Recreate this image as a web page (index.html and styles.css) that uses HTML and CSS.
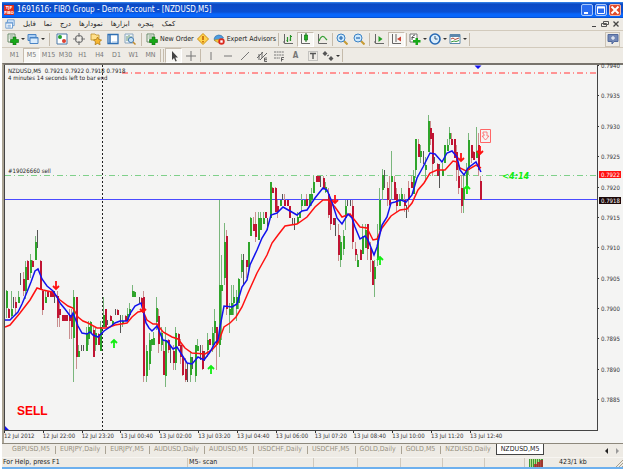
FILE: index.html
```html
<!DOCTYPE html>
<html lang="en">
<head>
<meta charset="utf-8">
<title>FIBO Group - Demo Account</title>
<link rel="stylesheet" href="styles.css">
</head>
<body>
<svg class="sprite" aria-hidden="true">
  <symbol id="i-new" viewBox="0 0 12 12"><path d="M1 1h7v8H1z" fill="#f4f6f2" stroke="#6a8a6a"/><path d="M2.500 3h4M2.500 5h3" stroke="#7aa07a"/><path d="M6 4h3v2.500h2.500v3H9V12H6V9.500H3.500v-3H6z" fill="#18a818" stroke="#0a6c0a" stroke-width=".6"/></symbol>
  <symbol id="i-profiles" viewBox="0 0 12 12"><path d="M1 1.500h8v6H1z" fill="#a9cdf3" stroke="#4b84c4"/><path d="M3 4.500h8v6H3z" fill="#d9ebfc" stroke="#4b84c4"/><path d="M3 5h8" stroke="#4b84c4"/></symbol>
  <symbol id="i-market" viewBox="0 0 12 12"><path d="M1 1h10v10H1z" fill="#fff" stroke="#4a78a8"/><circle cx="4" cy="4" r="2" fill="#22a030"/><circle cx="8" cy="8" r="2" fill="#dc4030"/></symbol>
  <symbol id="i-target" viewBox="0 0 12 12"><circle cx="6" cy="6" r="3.500" fill="none" stroke="#777" stroke-width="1.200"/><path d="M6 0v4M6 8v4M0 6h4M8 6h4" stroke="#777" stroke-width="1.200"/></symbol>
  <symbol id="i-star" viewBox="0 0 12 12"><path d="M1 1h4l1 1h3v5H1z" fill="#ffe08a" stroke="#bb8f2a" stroke-width=".8"/><path d="M7.500 4l1.300 2.500 2.800.4-2 2 .5 2.800-2.600-1.300-2.500 1.300.5-2.800-2-2 2.800-.4z" fill="#f7b733" stroke="#a87410" stroke-width=".7"/></symbol>
  <symbol id="i-terminal" viewBox="0 0 12 12"><path d="M1 1.500h10v9H1z" fill="#fff" stroke="#2f6fb4" stroke-width="1.300"/><path d="M3 2v8" stroke="#2f6fb4" stroke-width="1.500"/><path d="M5 9h5" stroke="#9bc0e4"/></symbol>
  <symbol id="i-tester" viewBox="0 0 12 12"><path d="M1 1h8v9H1z" fill="#eef4fa" stroke="#8ba6bd"/><path d="M3 3v5M5 2v5M7 3v3" stroke="#6d9b74"/><circle cx="7" cy="7" r="2.600" fill="#c4e2f6" stroke="#4d80b3"/><path d="M9 9l2.500 2.500" stroke="#c28c2c" stroke-width="1.500"/></symbol>
  <symbol id="i-meta" viewBox="0 0 12 12"><path d="M6 .5L11.500 6 6 11.500.5 6z" fill="#ffd34d" stroke="#d09010"/><path d="M6 3v4M6 8v1.500" stroke="#c06000" stroke-width="1.500"/></symbol>
  <symbol id="i-expert" viewBox="0 0 12 12"><path d="M1 6a5 5 0 0 1 9.500-1L7 8H2z" fill="#4e9de0" stroke="#2868a4" stroke-width=".6"/><path d="M1 7q3 3 6 3l2-4-5 .5z" fill="#f4c63d" stroke="#a9821a" stroke-width=".5"/><circle cx="8.500" cy="8.500" r="3.200" fill="#db2b20"/><path d="M7.300 7.300h2.400v2.400H7.300z" fill="#fff"/></symbol>
  <symbol id="i-bars" viewBox="0 0 12 12"><path d="M2.500 1v9.500H11M1 9h2" fill="none" stroke="#666"/><path d="M5.500 4v5M4.500 7.500h1M8.500 2v6M8.500 3.500H10M7.500 7h1" fill="none" stroke="#279427" stroke-width="1.200"/></symbol>
  <symbol id="i-candle" viewBox="0 0 12 12"><path d="M2.500 1v9.500H11" fill="none" stroke="#666"/><path d="M7 0v9" stroke="#126c12"/><path d="M5.500 2h3v5h-3z" fill="#22b322" stroke="#126c12" stroke-width=".7"/></symbol>
  <symbol id="i-line" viewBox="0 0 12 12"><path d="M2.500 1v9.500H11" fill="none" stroke="#666"/><path d="M3 8q3-8 7-2l1 1" fill="none" stroke="#35a035" stroke-width="1.200"/></symbol>
  <symbol id="i-zin" viewBox="0 0 12 12"><path d="M7.500 7.500l4 4" stroke="#c79b35" stroke-width="2"/><circle cx="5" cy="5" r="4" fill="#cde8fc" stroke="#3b82c4"/><path d="M3 5h4M5 3v4" stroke="#2267b0" stroke-width="1.200"/></symbol>
  <symbol id="i-zout" viewBox="0 0 12 12"><path d="M7.500 7.500l4 4" stroke="#c79b35" stroke-width="2"/><circle cx="5" cy="5" r="4" fill="#cde8fc" stroke="#3b82c4"/><path d="M3 5h4" stroke="#2267b0" stroke-width="1.200"/></symbol>
  <symbol id="i-scroll" viewBox="0 0 12 12"><path d="M2.500 1v9.500H11M1 9h2" fill="none" stroke="#666"/><path d="M5.500 3v6l4-3z" fill="#22a022"/></symbol>
  <symbol id="i-shift" viewBox="0 0 12 12"><path d="M2.500 1v9.500H11M6 1v8" fill="none" stroke="#666"/><path d="M11 3.500v5L7 6z" fill="#cf4535"/></symbol>
  <symbol id="i-ind" viewBox="0 0 12 12"><path d="M1 1h7v8H1z" fill="#fff" stroke="#777"/><path d="M3 7q0-5 3-5M2.500 4.500h3" fill="none" stroke="#555"/><path d="M6.500 5h2.500v2h2.500v2.500H9V12H6.500V9.500H4V7h2.500z" fill="#18a818"/></symbol>
  <symbol id="i-clock" viewBox="0 0 12 12"><circle cx="6" cy="6" r="5" fill="#dceefc" stroke="#2769b4" stroke-width="1.600"/><path d="M6 3v3h2.500" fill="none" stroke="#33567c"/></symbol>
  <symbol id="i-tpl" viewBox="0 0 12 12"><path d="M1 1.500h10v9H1z" fill="#fff" stroke="#5b87ac"/><path d="M1 3h10" stroke="#5b87ac" stroke-width="2"/><path d="M2 6l2-1 2 1.500L10 5" fill="none" stroke="#b14a3a"/><path d="M2 9l3-1 2 .5L10 7.500" fill="none" stroke="#36963c"/></symbol>
  <symbol id="i-chat" viewBox="0 0 12 12"><path d="M1 1.500h10v7H7L5 11V8.500H1z" fill="#7287b5" stroke="#50689c"/><path d="M4 5h4M6 3v4" stroke="#fff"/></symbol>
  <symbol id="i-cursor" viewBox="0 0 12 12"><path d="M4 1v9l2-2 1.500 3.500 1.300-.6L7.300 7.500H10z" fill="#444"/></symbol>
  <symbol id="i-cross" viewBox="0 0 12 12"><path d="M6 1v10M1 6h10" stroke="#777"/></symbol>
  <symbol id="i-vline" viewBox="0 0 12 12"><path d="M6 2v8" stroke="#777"/></symbol>
  <symbol id="i-hline" viewBox="0 0 12 12"><path d="M2 6h8" stroke="#777"/></symbol>
  <symbol id="i-trend" viewBox="0 0 12 12"><path d="M2 10l8-8" stroke="#777"/></symbol>
  <symbol id="i-channel" viewBox="0 0 12 12"><path d="M1 8l6-6M4 10l7-7M3 4v6M6 2v6" stroke="#666"/><path d="M11 8H8.500v3.500H11M8.500 9.700H11" fill="none" stroke="#555" stroke-width=".9"/></symbol>
  <symbol id="i-fibo" viewBox="0 0 12 12"><path d="M1 2h10M1 5h10M1 8h6" stroke="#777" stroke-dasharray="2 .6"/><path d="M11 7.500H8.500v4M8.500 9.500h2" fill="none" stroke="#555" stroke-width=".9"/></symbol>
  <symbol id="i-label" viewBox="0 0 12 12"><path d="M1.500 1.500h9v9h-9z" fill="none" stroke="#999" stroke-dasharray="1 1"/><path d="M3 3.500h6M6 3.500V9" stroke="#555" stroke-width="1.400"/></symbol>
  <symbol id="i-arrows" viewBox="0 0 12 12"><path d="M3 1l2.500 2.500L3 6 .5 3.500zM9 6l2.500 2.500L9 11 6.500 8.500z" fill="#555"/><path d="M5 6l2-1" stroke="#555"/></symbol>
  <symbol id="i-doc" viewBox="0 0 12 12"><path d="M3 1h8v7H3z" fill="#d9ebfc" stroke="#5b92cc"/><path d="M1 4h8v7H1z" fill="#fff" stroke="#5b92cc"/><path d="M1 5h8M3 7.500h4M3 9.500h4" stroke="#5b92cc"/></symbol>
</svg>

<div class="window">
  <header class="title">
    <span class="logo"><b>TJF</b><b>FIBO</b></span>
    <h1>1691616: FIBO Group - Demo Account - [NZDUSD,M5]</h1>
    <div class="winbtns">
      <button aria-label="Minimize"><svg viewBox="0 0 10 10"><path d="M2 8h4" stroke="#fff" stroke-width="2"/></svg></button>
      <button aria-label="Restore"><svg viewBox="0 0 10 10"><path d="M1.500 2h7v6.500h-7z" fill="none" stroke="#fff"/><path d="M1 2.500h8" stroke="#fff" stroke-width="2"/></svg></button>
      <button class="close" aria-label="Close"><svg viewBox="0 0 10 10"><path d="M1.500 1.500l7 7M8.500 1.500l-7 7" stroke="#fff" stroke-width="2"/></svg></button>
    </div>
  </header>

  <nav class="menu">
    <svg class="ico"><use href="#i-doc"/></svg>
    <a href="#" lang="fa">فایل</a><a href="#" lang="fa">نما</a><a href="#" lang="fa">درج</a><a href="#" lang="fa">نمودارها</a><a href="#" lang="fa">ابزارها</a><a href="#" lang="fa">پنجره</a><a href="#" lang="fa">کمک</a>
    <div class="docbtns">
      <button aria-label="Minimize chart"><svg viewBox="0 0 8 8"><path d="M2 6.500h4" stroke="#444"/></svg></button>
      <button aria-label="Restore chart"><svg viewBox="0 0 8 8"><path d="M2.500 1.500h5v3h-5zM.5 3.500h5v3h-5z" fill="none" stroke="#555"/></svg></button>
      <button aria-label="Close chart"><svg viewBox="0 0 8 8"><path d="M1.500 1.500l5 5M6.500 1.500l-5 5" stroke="#444" stroke-width="1.300"/></svg></button>
    </div>
  </nav>

  <div class="toolbar">
    <button class="drop" aria-label="New chart"><svg class="ico"><use href="#i-new"/></svg></button>
    <button class="drop" aria-label="Profiles"><svg class="ico"><use href="#i-profiles"/></svg></button>
    <i class="sep wide-sep"></i>
    <button aria-label="Market Watch"><svg class="ico"><use href="#i-market"/></svg></button>
    <button aria-label="Data Window"><svg class="ico"><use href="#i-target"/></svg></button>
    <button aria-label="Navigator"><svg class="ico"><use href="#i-star"/></svg></button>
    <button aria-label="Terminal"><svg class="ico"><use href="#i-terminal"/></svg></button>
    <button aria-label="Strategy Tester"><svg class="ico"><use href="#i-tester"/></svg></button>
    <i class="sep wide-sep"></i>
    <button class="wide"><svg class="ico"><use href="#i-new"/></svg>New Order</button>
    <button aria-label="MetaEditor"><svg class="ico"><use href="#i-meta"/></svg></button>
    <button class="wide"><svg class="ico"><use href="#i-expert"/></svg>Expert Advisors</button>
    <i class="sep"></i>
    <button aria-label="Bar chart"><svg class="ico"><use href="#i-bars"/></svg></button>
    <button class="on" aria-label="Candlesticks"><svg class="ico"><use href="#i-candle"/></svg></button>
    <button aria-label="Line chart"><svg class="ico"><use href="#i-line"/></svg></button>
    <i class="sep"></i>
    <button aria-label="Zoom in"><svg class="ico"><use href="#i-zin"/></svg></button>
    <button aria-label="Zoom out"><svg class="ico"><use href="#i-zout"/></svg></button>
    <i class="sep"></i>
    <button aria-label="Auto scroll"><svg class="ico"><use href="#i-scroll"/></svg></button>
    <button class="on" aria-label="Chart shift"><svg class="ico"><use href="#i-shift"/></svg></button>
    <i class="sep"></i>
    <button class="drop" aria-label="Indicators"><svg class="ico"><use href="#i-ind"/></svg></button>
    <button class="drop" aria-label="Periods"><svg class="ico"><use href="#i-clock"/></svg></button>
    <button class="drop" aria-label="Templates"><svg class="ico"><use href="#i-tpl"/></svg></button>
    <i class="sep"></i>
    <button class="chat" aria-label="Chat"><svg class="ico"><use href="#i-chat"/></svg></button>
  </div>

  <div class="toolbar frames">
    <button>M1</button><button class="on">M5</button><button>M15</button><button>M30</button><button>H1</button><button>H4</button><button>D1</button><button>W1</button><button>MN</button>
    <i class="sep"></i><i class="sep"></i>
    <button class="on" aria-label="Cursor"><svg class="ico"><use href="#i-cursor"/></svg></button>
    <button aria-label="Crosshair"><svg class="ico"><use href="#i-cross"/></svg></button>
    <i class="sep"></i>
    <button aria-label="Vertical line"><svg class="ico"><use href="#i-vline"/></svg></button>
    <button aria-label="Horizontal line"><svg class="ico"><use href="#i-hline"/></svg></button>
    <button aria-label="Trendline"><svg class="ico"><use href="#i-trend"/></svg></button>
    <button aria-label="Channel"><svg class="ico"><use href="#i-channel"/></svg></button>
    <button aria-label="Fibonacci"><svg class="ico"><use href="#i-fibo"/></svg></button>
    <button class="letter">A</button>
    <button aria-label="Text label"><svg class="ico"><use href="#i-label"/></svg></button>
    <button class="drop" aria-label="Arrows"><svg class="ico"><use href="#i-arrows"/></svg></button>
    <i class="sep"></i>
  </div>

  <main class="chart">
    <section class="plot">
      <svg id="plot" viewBox="5 65 592 365" preserveAspectRatio="none" aria-label="NZDUSD M5 candlestick chart">
        <path d="M122 72.500H597" class="stop"/>
        <path d="M5 175.500H597" class="entry"/>
        <path d="M5 199.500H597" class="bid"/>
        <path d="M102.500 65V430" class="day"/>
        <g id="candles" shape-rendering="crispEdges"></g>
        <polyline class="slow" points="5,327 10,325 20,313 30,300 37,288 43,290 52,292 60,300 68,306 73,308 78,317 83,321 88,323 97,328 107,328 115,325 127,323 132,317 138,312 143,311 147,320 153,324 157,324 163,332 172,337 178,339 185,348 192,353 205,354 212,350 218,343 224,327 230,323 236,317 242,307 248,293 257,273 267,255 272,243 278,235 285,226 297,224 307,217 315,207 323,200 328,200 335,207 342,217 350,214 353,218 360,227 367,228 373,240 377,239 382,228 391,216 400,210 407,209 412,203 418,190 424,183 430,173 437,170 445,170 453,161 457,162 460,168 466,171 476,165 481,168"/>
        <polyline class="fast" points="5,320 10,320 14,316 18,312 22,304 27,292 31,282 35,271 38,269 42,279 47,286 53,291 57,297 60,303 65,309 68,313 71,317 73,313 75,318 78,326 82,333 87,334 90,332 93,335 98,337 104,331 110,327 115,323 120,321 127,321 131,312 135,306 141,303 143,310 146,323 149,328 152,331 157,326 163,340 167,341 173,349 177,347 182,355 187,363 192,364 198,357 204,360 210,352 215,343 218,340 220,327 224,306 232,307 237,304 242,287 247,280 250,265 257,250 262,238 267,230 271,215 277,213 283,207 290,211 297,215 302,211 307,210 315,198 323,188 327,190 332,202 337,218 342,224 348,214 352,218 355,227 360,239 365,236 368,240 374,255 377,247 382,225 387,217 391,203 395,202 401,200 406,202 412,195 417,178 423,167 430,153 435,154 442,162 447,153 452,151 457,157 460,170 464,175 468,168 476,162 481,172"/>
        <g id="signals"></g>
        <path d="M480.500 129.500h10v13h-10z" fill="none" stroke="#f66"/>
        <path d="M483 132h4v4h2l-3.500 4-3.500-4h2v-2h-1z" fill="none" stroke="#f66" stroke-width=".8"/>
        <path d="M474.500 65.500h7l-3.500 3.500zM5 426v4h4z" fill="#11e"/>
      </svg>
      <p class="info">NZDUSD,M5&nbsp; 0.7921 0.7922 0.7918 0.7918<br>4 minutes 14 seconds left to bar end</p>
      <span class="order">#19026660 sell</span>
      <span class="timer">&lt;4:14</span>
      <strong class="sell">SELL</strong>
    </section>
    <aside class="prices">
      <span>0.7940</span><span>0.7935</span><span>0.7930</span><span>0.7925</span><span>0.7920</span><span>0.7915</span><span>0.7910</span><span>0.7905</span><span>0.7900</span><span>0.7895</span><span>0.7890</span><span>0.7885</span>
      <b class="tag ask">0.7922</b><b class="tag last">0.7918</b>
    </aside>
    <div class="dates">
      <span>12 Jul 2012</span><span>12 Jul 22:00</span><span>12 Jul 23:20</span><span>13 Jul 00:40</span><span>13 Jul 02:00</span><span>13 Jul 03:20</span><span>13 Jul 04:40</span><span>13 Jul 06:00</span><span>13 Jul 07:20</span><span>13 Jul 08:40</span><span>13 Jul 10:00</span><span>13 Jul 11:20</span><span>13 Jul 12:40</span>
    </div>
  </main>

  <nav class="tabs">
    <button>GBPUSD,M5</button><button>EURJPY,Daily</button><button>EURJPY,M5</button><button>AUDUSD,Daily</button><button>AUDUSD,M5</button><button>USDCHF,Daily</button><button>USDCHF,M5</button><button>GOLD,Daily</button><button>GOLD,M5</button><button>NZDUSD,Daily</button><button class="active">NZDUSD,M5</button>
    <div class="scroll">
      <button aria-label="Scroll left"><svg viewBox="0 0 6 6"><path d="M4 0v6L1 3z" fill="#222"/></svg></button>
      <button aria-label="Scroll right"><svg viewBox="0 0 6 6"><path d="M2 0v6l3-3z" fill="#999"/></svg></button>
    </div>
  </nav>

  <footer class="status">
    <span>For Help, press F1</span><span>M5- scan</span><span></span><span></span><span></span><span></span><span></span><span></span>
    <span class="traffic"><svg viewBox="0 0 14 8"><path d="M0 0h14v8H0z" fill="#3d9a34"/><path d="M1.500 0v8M3.500 0v8M5.500 0v8M7.500 0v8M9.500 0v8M11.500 0v8" stroke="#b9d98f"/><path d="M5 8V5h3V3h3V1h3v7z" fill="#b3202c" opacity=".8"/></svg>423/1 kb</span>
    <svg class="grip" viewBox="0 0 8 8"><path d="M1 8l7-7M4 8l4-4M7 8l1-1" stroke="#a8a08c"/></svg>
  </footer>
</div>
<script src="chart.js"></script>
</body>
</html>
```
FILE: styles.css
```css
* { box-sizing: border-box; }
body {
  margin: 0;
  background: #fff;
  font: 7px/9px "DejaVu Sans Condensed", "DejaVu Sans", sans-serif;
  color: #222;
}
button {
  margin: 0;
  padding: 0;
  border: 0;
  background: none;
  font: inherit;
  color: inherit;
  white-space: nowrap;
}
a { color: inherit; text-decoration: none; }
.sprite { position: absolute; width: 0; height: 0; }
.ico { width: 12px; height: 12px; flex: none; display: block; }

.window {
  display: flex;
  flex-direction: column;
  min-height: 100vh;
  padding: 2px 2px 1px;
}
.title, .menu, .toolbar, .tabs, .status { background: #eeebe5; }

/* title bar */
.title {
  display: flex;
  align-items: center;
  height: 16px;
  padding: 0 2px;
  gap: 3px;
  background: linear-gradient(#3a8cf0 0, #0c49c4 2px, #0b50d2 10px, #0866fb 12px, #0866fb 15px, #0a3fa8 16px);
}
.logo {
  display: flex;
  flex-direction: column;
  width: 10px;
  background: #e0301e;
  color: #fff;
  font-size: 4px;
  line-height: 5px;
  text-align: center;
}
.title h1 {
  margin: 0;
  flex: 1;
  color: #fff;
  font: 8px/14px "DejaVu Sans Condensed", sans-serif;
  white-space: nowrap;
}
.winbtns { display: flex; gap: 2px; }
.winbtns button {
  width: 12px;
  height: 12px;
  border: 1px solid #a9c8fa;
  border-radius: 2px;
  background: #2a6cf0;
}
.winbtns .close { background: #e2492a; border-color: #f5b5a5; }
.winbtns svg { display: block; width: 10px; height: 10px; }

/* menu */
.menu {
  display: flex;
  align-items: center;
  gap: 8px;
  height: 12px;
  padding: 0 3px;
  font-family: "DejaVu Sans", sans-serif;
}
.menu .ico { width: 10px; height: 10px; }
.docbtns { display: flex; gap: 3px; margin-left: auto; }
.docbtns svg { display: block; width: 8px; height: 8px; }

/* toolbars */
.toolbar {
  display: flex;
  align-items: center;
  height: 17px;
  padding: 0 3px 0 4px;
  border-top: 1px solid #d2cabc;
}
.toolbar button {
  display: flex;
  align-items: center;
  justify-content: center;
  flex: none;
  width: 17px;
  height: 15px;
}
.toolbar .wide { width: auto; padding: 0 1px; gap: 2px; }
.toolbar .drop { width: 20px; }
.drop::after {
  content: "";
  margin-left: 2px;
  border: 2px solid transparent;
  border-top-color: #333;
  border-bottom: 0;
}
.toolbar .on { background: #f8f7f4; border: 1px solid #c6bcae; border-right-color: #fff; border-bottom-color: #fff; }
.sep { width: 1px; height: 13px; margin: 0 1px; background: #c5bbab; flex: none; }
.wide-sep { margin: 0 3px; }
.toolbar .chat { margin-left: auto; border: 1px solid #cac2b5; width: 15px; }
.frames { color: #777; height: 16px; }
.frames .letter { font-size: 8px; font-weight: bold; }

/* chart */
.chart {
  flex: 1;
  display: grid;
  grid-template-columns: 1fr 25px;
  grid-template-rows: 1fr 12px;
  border-top: 2px solid #77736c;
  border-left: 2px solid #aaa394;
  background: #f4f4f3;
  color: #333;
  font-size: 6px;
}
.plot {
  position: relative;
  border: 1px solid #444;
  border-width: 0 1px 1px;
}
#plot { position: absolute; inset: 0; width: 100%; height: 100%; }
.stop, .entry, .bid, .day { fill: none; shape-rendering: crispEdges; }
.stop { stroke: #ff9494; stroke-width: 2; stroke-dasharray: 6 3 1 3; }
.entry { stroke: #7fd08a; stroke-dasharray: 6 3 1 3; }
.bid { stroke: #4a4aff; }
.day { stroke: #222; stroke-dasharray: 2 2; }
.slow, .fast { fill: none; stroke-width: 1.5; }
.slow { stroke: #f11; }
.fast { stroke: #11e; }
.info { position: absolute; left: 3px; top: 2px; margin: 0; line-height: 7px; }
.info, .order { color: #222; white-space: nowrap; }
.order { position: absolute; left: 3px; top: 28%; line-height: 7px; }
.timer {
  position: absolute;
  left: 84%;
  top: 29%;
  color: #1e1;
  font: italic bold 9px/10px "DejaVu Sans Condensed", sans-serif;
}
.sell {
  position: absolute;
  left: 12px;
  bottom: 12px;
  color: #f00;
  font: bold 12px/14px "Liberation Sans", sans-serif;
}
.prices { position: relative; display: flex; flex-direction: column; }
.prices span {
  flex: 0 0 8.300%;
  display: flex;
  align-items: flex-start;
  gap: 2px;
  line-height: 2px;
}
.prices span::before { content: ""; width: 1px; height: 1px; background: #333; }
.tag {
  position: absolute;
  left: 1px;
  width: 22px;
  padding-left: 2px;
  font-weight: normal;
  line-height: 7px;
  color: #fff;
}
.ask { top: 29%; background: #f11; }
.last { top: 36%; background: #1c0808; }
.dates { display: flex; padding-right: 1px; }
.dates span {
  flex: 0 0 6.550%;
  white-space: nowrap;
  line-height: 10px;
  background: linear-gradient(#333, #333) 0 0 / 1px 2px no-repeat;
}

/* chart tabs */
.tabs {
  display: flex;
  height: 14px;
  padding-left: 5px;
  border-top: 1px solid #8d887c;
  color: #96907f;
}
.tabs > button { height: 11px; padding: 0 5px; position: relative; }
.tabs > button + button:not(.active)::before {
  content: "";
  position: absolute;
  left: 0;
  top: 2px;
  height: 8px;
  border-left: 1px solid #aaa394;
}
.tabs .active { background: #fff; color: #222; border: 1px solid #444; border-top: 0; padding: 0 4px; }
.scroll { display: flex; align-items: center; gap: 4px; margin-left: auto; padding-right: 3px; }
.scroll svg { display: block; width: 6px; height: 6px; }

/* status bar */
.status {
  display: grid;
  grid-template-columns: 185fr 65fr 61fr 44fr 43fr 42fr 42fr 40fr 91fr 8px;
  align-items: center;
  height: 12px;
  border-top: 1px solid #f7f5f1;
  border-bottom: 2px solid #6db0ee;
  white-space: nowrap;
}
.status span { height: 9px; padding-left: 1px; }
.status span + span { border-left: 1px solid #cfc8bc; }
.traffic { display: flex; align-items: center; gap: 16px; }
.status .traffic { padding-left: 4px; }
.traffic svg { width: 14px; height: 8px; }
.grip { width: 8px; height: 8px; }
```
FILE: chart.js
```js
// Each candle: x, high, body top, body bottom, low, kind (g up, r down, k doji)
const candles = `
6 290 291 308 318 g;8 308 309 318 318 r;11 291 309 316 319 g;13 297 298 308 308 k;15 297 302 308 315 r;18 291 297 303 303 g;20 273 273 285 285 k;23 272 279 291 296 r;25 261 267 291 299 g;27 260 261 280 280 r;30 254 260 273 278 g;32 260 261 267 267 r;35 236 242 260 260 g;37 230 230 248 248 k;40 260 261 290 290 r;42 290 291 310 315 r;45 291 297 303 303 g;47 291 292 297 297 r;50 291 292 297 297 r;52 291 292 297 297 r;54 291 291 303 303 k;57 291 296 318 327 r;59 304 309 315 327 r;62 315 315 321 321 r;64 315 315 321 321 r;66 315 315 321 321 r;69 309 315 321 339 r;71 309 315 327 339 r;73 290 297 338 382 g;76 297 297 357 369 r;78 345 351 357 357 g;81 345 345 351 351 k;83 345 345 351 351 k;86 327 333 351 351 g;88 321 327 339 345 g;90 321 322 333 333 g;93 327 330 357 357 r;95 327 333 345 351 g;98 333 334 345 345 r;100 321 327 351 351 g;103 297 315 327 327 g;105 309 309 327 327 r;107 320 320 325 325 k;110 315 316 321 321 r;112 320 321 326 326 g;115 309 309 315 315 k;117 309 310 315 315 r;120 315 315 333 333 k;122 315 321 323 327 g;125 315 316 321 321 r;127 308 314 320 321 g;129 303 309 315 315 g;132 285 291 297 297 g;134 291 292 297 297 g;139 297 297 303 303 k;141 297 298 306 306 r;143 291 297 376 382 r;146 345 351 376 382 g;149 333 340 364 370 g;151 339 339 345 351 g;153 332 338 345 345 g;156 297 308 322 330 g;158 309 316 344 353 r;161 327 333 345 351 g;163 340 351 375 375 r;165 327 340 376 387 g;168 339 340 350 353 r;170 345 345 363 363 k;173 345 351 363 370 r;175 327 333 363 370 g;178 333 334 346 346 r;180 339 345 357 364 r;182 345 357 375 376 r;185 358 369 380 382 r;187 363 363 382 382 k;190 351 357 375 382 g;192 357 364 369 369 k;195 345 345 376 382 g;197 339 346 351 351 g;200 345 345 360 360 k;202 345 351 369 370 r;204 351 351 361 361 k;207 333 340 350 357 g;209 339 339 345 345 r;212 327 333 345 352 g;214 309 321 333 345 g;216 327 327 345 370 r;219 200 285 345 357 g;221 255 285 291 340 g;224 223 242 278 285 g;226 230 236 309 315 r;229 303 309 315 333 g;231 285 303 315 315 g;233 285 297 303 315 g;236 290 297 309 321 g;238 278 279 303 309 g;241 254 260 272 278 g;243 254 254 284 284 k;246 260 260 267 278 r;248 242 242 267 275 g;250 217 218 236 236 g;253 217 224 231 231 r;255 212 224 237 242 r;258 212 218 240 240 g;260 212 218 230 230 g;263 212 218 224 224 g;265 212 212 218 218 r;267 218 218 230 230 k;270 182 182 218 218 g;272 187 188 193 193 r;275 187 188 212 212 r;277 200 206 212 218 r;280 200 200 206 206 g;282 194 194 200 200 k;284 194 200 206 206 r;287 200 200 206 206 r;289 206 206 218 218 r;292 218 218 224 224 k;294 218 218 230 230 k;297 212 217 223 224 g;299 212 212 218 218 g;301 194 200 206 212 g;304 200 200 206 206 g;306 194 199 206 206 r;309 194 194 206 206 g;311 188 194 200 206 g;313 176 182 193 193 g;316 176 176 182 182 r;318 176 176 182 182 r;320 176 176 187 187 k;323 176 178 188 188 r;325 182 187 192 193 g;328 188 194 215 218 r;330 200 200 224 230 r;333 218 218 225 225 r;335 218 218 236 236 k;338 224 235 255 261 r;340 236 242 260 267 g;343 230 236 249 255 g;345 200 206 218 230 g;347 200 200 206 206 k;350 200 200 206 206 k;352 200 206 242 249 r;355 242 249 255 261 r;357 254 260 267 267 g;360 249 250 260 260 r;362 224 236 254 254 g;365 224 230 248 248 g;367 224 224 249 260 r;370 242 248 260 272 r;372 260 261 285 285 r;374 260 267 279 297 g;377 224 236 260 266 g;379 188 200 230 236 g;382 169 175 190 200 g;384 170 170 188 188 k;387 182 188 200 206 r;389 176 200 205 206 r;391 151 176 182 200 g;394 176 182 200 200 r;396 188 194 206 212 r;399 194 199 206 206 g;401 188 194 200 200 g;404 194 200 206 212 r;406 205 205 218 218 k;408 181 188 200 212 r;411 176 182 188 188 r;413 170 176 194 194 g;415 139 139 170 178 g;418 139 144 157 157 r;420 145 151 157 163 g;423 151 151 164 164 k;425 157 165 170 181 g;428 115 121 152 152 g;430 121 128 139 145 r;432 133 133 164 176 r;434 157 157 163 163 k;437 163 164 176 176 r;439 164 164 188 188 k;442 163 170 176 176 g;444 145 145 163 163 g;447 139 145 151 151 g;449 127 133 139 145 g;451 133 139 145 145 r;454 139 139 158 158 r;456 145 152 170 181 r;458 163 176 188 194 r;461 175 188 206 213 r;463 175 188 200 213 g;466 163 170 188 194 g;468 133 140 170 175 g;471 145 145 158 163 r;473 151 152 160 160 r;476 127 151 158 158 g;478 133 145 170 176 r;480 176 181 200 200 r`;

const wick = { g: '#7ab67c', r: '#c98f8f', k: '#555' };
const body = { g: '#2fa52b', r: '#c01433', k: '#555' };

document.getElementById('candles').innerHTML = candles.trim().split(';').map(line => {
  const [x, high, top, bottom, low, kind] = line.trim().split(' ');
  const width = kind === 'k' ? 1 : 2;
  return `<path d="M${x} ${high}h1V${low}h-1z" fill="${wick[kind]}"/>` +
    `<path d="M${x} ${top}h${width}V${bottom}h-${width}z" fill="${body[kind]}"/>`;
}).join('');

const down = [[56, 285], [143, 308], [335, 199], [461, 157], [480, 150]];
const up = [[114, 344], [211, 370], [380, 261], [467, 190]];
const arrow = (x, y, turn, color) =>
  `<path transform="translate(${x} ${y}) rotate(${turn})" d="M0 -4v8M-3 1l3 3 3 -3" fill="none" stroke="${color}" stroke-width="1.8"/>`;

document.getElementById('signals').innerHTML =
  down.map(([x, y]) => arrow(x, y, 0, '#f11')).join('') +
  up.map(([x, y]) => arrow(x, y, 180, '#1e1')).join('');
```
